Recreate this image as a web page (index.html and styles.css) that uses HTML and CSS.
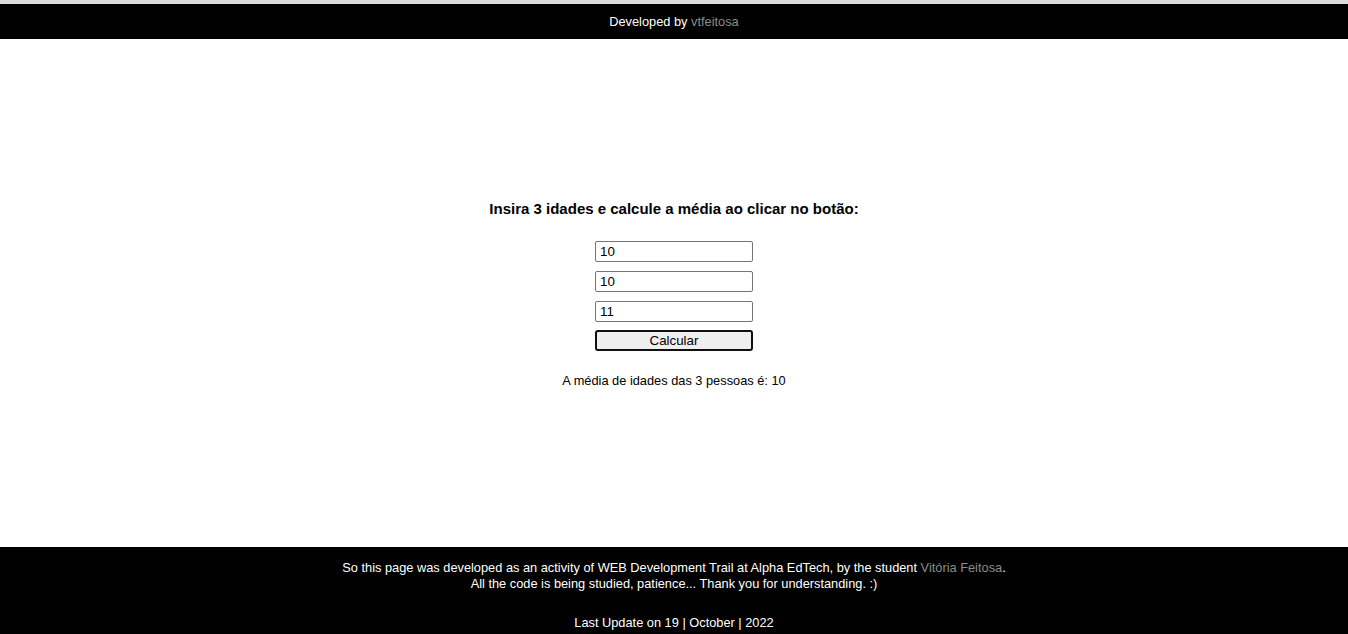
FILE: index.html
```html
<!DOCTYPE html>
<html lang="pt-BR">
<head>
<meta charset="utf-8">
<title>Média de idades</title>
<link rel="stylesheet" href="styles.css">
</head>
<body>
<div class="topline"></div>
<header class="site-header">
  <p>Developed by <a href="#">vtfeitosa</a></p>
</header>
<main class="content">
  <h3 class="title">Insira 3 idades e calcule a média ao clicar no botão:</h3>
  <div class="form">
    <input class="field" type="text" value="10">
    <input class="field" type="text" value="10">
    <input class="field" type="text" value="11">
    <button class="btn" type="button">Calcular</button>
  </div>
  <p class="result">A média de idades das 3 pessoas é: 10</p>
</main>
<footer class="site-footer">
  <p class="foot-line">So this page was developed as an activity of WEB Development Trail at Alpha EdTech, by the student <a href="#">Vitória Feitosa</a>.<br>All the code is being studied, patience... Thank you for understanding. :)</p>
  <p class="foot-update">Last Update on 19 | October | 2022</p>
</footer>
</body>
</html>
```
FILE: styles.css
```css
html, body {
  margin: 0;
  padding: 0;
}
body {
  height: 634px;
  display: flex;
  flex-direction: column;
  font-family: "Liberation Sans", Arial, sans-serif;
  background: #ffffff;
  color: #000;
}
.topline {
  height: 4px;
  background: #dcdcdc;
  flex: none;
}
.site-header {
  flex: none;
  height: 35px;
  background: #000;
  color: #fff;
  font-size: 12.8px;
  display: flex;
  align-items: center;
  justify-content: center;
}
.site-header p {
  margin: 0;
}
a {
  color: #8c8c8c;
  text-decoration: none;
}
.content {
  flex: 1;
  display: flex;
  flex-direction: column;
  align-items: center;
  justify-content: center;
  padding-top: 2px;
}
.title {
  margin: 0 0 23px;
  font-size: 15px;
  font-weight: bold;
  line-height: 18px;
}
.form {
  display: flex;
  flex-direction: column;
  align-items: center;
  gap: 9px;
}
.field {
  box-sizing: border-box;
  width: 158px;
  height: 21px;
  margin: 0;
  padding: 1px 4px;
  border: 1px solid #767676;
  border-radius: 2px;
  font-family: "Liberation Sans", Arial, sans-serif;
  font-size: 13.33px;
  color: #000;
  background: #fff;
}
.btn {
  box-sizing: border-box;
  width: 158px;
  height: 21px;
  margin-top: -1px;
  padding: 0;
  border: 2px solid #101010;
  border-radius: 3px;
  background: #efefef;
  font-family: "Liberation Sans", Arial, sans-serif;
  font-size: 13.33px;
  color: #000;
}
.result {
  margin: 22px 0 0;
  font-size: 12.8px;
  line-height: 16px;
}
.site-footer {
  flex: none;
  height: 87px;
  box-sizing: border-box;
  background: #000;
  color: #fff;
  font-size: 12.8px;
  line-height: 16px;
  text-align: center;
  padding-top: 13px;
}
.foot-line {
  margin: 0;
}
.foot-update {
  margin: 23px 0 0;
}
```
